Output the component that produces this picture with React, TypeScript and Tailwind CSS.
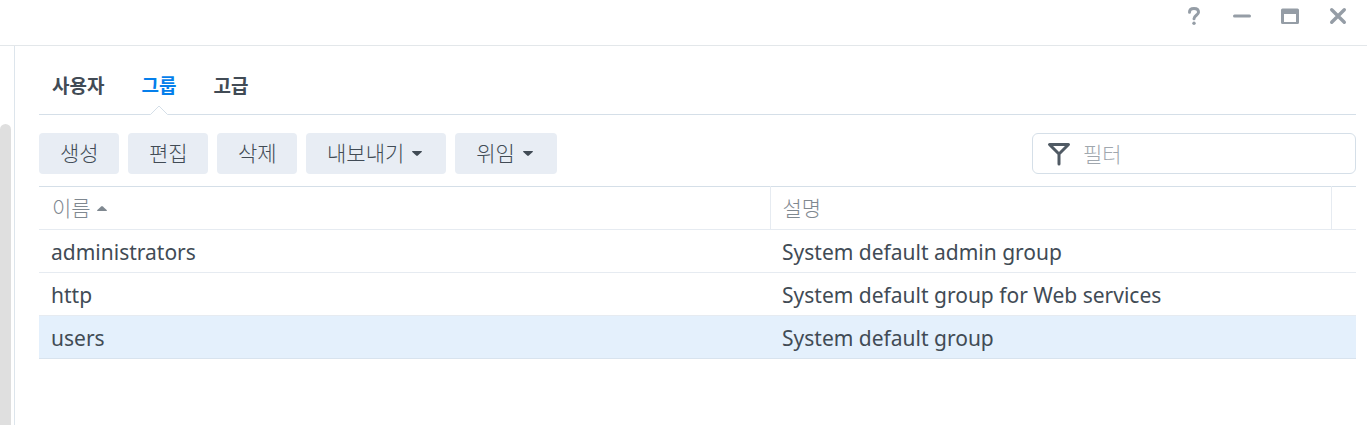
import { useState } from 'react'

interface Group {
    name: string
    description: string
}

const TABS = ['사용자', '그룹', '고급']

const ACTIONS = [
    { label: '생성', menu: false },
    { label: '편집', menu: false },
    { label: '삭제', menu: false },
    { label: '내보내기', menu: true },
    { label: '위임', menu: true },
]

const GROUPS: Group[] = [
    { name: 'administrators', description: 'System default admin group' },
    { name: 'http', description: 'System default group for Web services' },
    { name: 'users', description: 'System default group' },
]

function Caret({ up = false }: { up?: boolean }) {
    return (
        <svg
            width="10"
            height="5"
            viewBox="0 0 10 5"
            fill="currentColor"
            className={up ? 'rotate-180' : ''}
            aria-hidden="true"
        >
            <path d="M.6 0h8.8q.9.2.3.9L5.8 4.6q-.8.7-1.6 0L.3.9Q-.3.2.6 0Z" />
        </svg>
    )
}

function WindowBar() {
    return (
        <header className="flex h-[46px] shrink-0 items-start justify-end gap-6 border-b border-[#e3e7ea] pt-1 pr-[17px] text-[#959da6]">
            <button type="button" aria-label="도움말" className="size-6">
                <svg viewBox="0 0 24 24" fill="none" stroke="currentColor" strokeWidth="3" strokeLinecap="round">
                    <path d="M7.5 8.3C7.5 5.7 9.3 4.5 12 4.5s4.5 1.3 4.5 3.7c0 2.9-4.5 3.3-4.5 6.6" />
                    <circle cx="12" cy="19.3" r="1.7" fill="currentColor" stroke="none" />
                </svg>
            </button>
            <button type="button" aria-label="최소화" className="size-6">
                <svg viewBox="0 0 24 24" fill="currentColor">
                    <rect x="3" y="10.5" width="18" height="3" rx="1.5" />
                </svg>
            </button>
            <button type="button" aria-label="최대화" className="size-6">
                <svg viewBox="0 0 24 24" fill="currentColor" fillRule="evenodd">
                    <path d="M4.5 4.5h15Q21 4.500 21 6v12.500q0 1.500-1.500 1.500h-15Q3 20 3 18.500V6q0-1.500 1.500-1.500ZM6 10v8h12v-8Z" />
                </svg>
            </button>
            <button type="button" aria-label="닫기" className="size-6">
                <svg viewBox="0 0 24 24" fill="none" stroke="currentColor" strokeWidth="3.4" strokeLinecap="round">
                    <path d="m5.7 5.7 12.6 12.6M18.3 5.7 5.700 18.300" />
                </svg>
            </button>
        </header>
    )
}

export default function App() {
    const [tab, setTab] = useState('그룹')
    const [selected, setSelected] = useState('users')
    const [filter, setFilter] = useState('')

    const rows = GROUPS.filter(g => g.name.includes(filter))

    return (
        <div className="flex min-h-screen flex-col bg-white font-['Noto_Sans','Noto_Sans_CJK_KR',sans-serif] text-[21px] text-[#414b55]">
            <WindowBar />

            <div className="flex flex-1">
                <aside className="flex w-[15px] shrink-0 border-r border-[#dde5ec] pt-[78px]">
                    <div className="w-[11px] rounded-t-full bg-[#dfdfdf]" />
                </aside>

                <main className="min-w-0 flex-1 pr-[11px] pl-6">
                    <nav className="flex h-[69px] gap-[37px] border-b border-[#d5dfe8] px-[13px] font-['Noto_Sans_CJK_KR',sans-serif] text-[19px] font-bold">
                        {TABS.map(t => (
                            <button
                                key={t}
                                type="button"
                                onClick={() => setTab(t)}
                                className={`relative pt-[10px] leading-6 ${t === tab ? 'text-[#057feb]' : ''}`}
                            >
                                {t}
                                {t === tab && (
                                    <svg
                                        width="18"
                                        height="10"
                                        viewBox="0 0 18 10"
                                        className="absolute -bottom-px left-1/2 -translate-x-1/2"
                                    >
                                        <path d="M0 10 9 1l9 9Z" fill="#fff" />
                                        <path d="M.5 9.5 9 1l8.5 8.5" fill="none" stroke="#d5dfe8" />
                                    </svg>
                                )}
                            </button>
                        ))}
                    </nav>

                    <div className="flex items-center gap-[9px] pt-[18px] pb-3 font-['Noto_Sans_CJK_KR',sans-serif] font-light">
                        {ACTIONS.map(a => (
                            <button
                                key={a.label}
                                type="button"
                                className={`flex h-[41px] min-w-20 items-center gap-2 rounded bg-[#e8edf4] pl-[21px] ${
                                    a.menu ? 'pr-6' : 'pr-5'
                                }`}
                            >
                                <span className="pb-0.5">{a.label}</span>
                                {a.menu && <Caret />}
                            </button>
                        ))}

                        <label className="ml-auto flex h-[41px] w-[324px] items-center gap-3 rounded-md border border-[#d5dfe8] px-[14px]">
                            <svg
                                width="24"
                                height="24"
                                viewBox="0 0 24 24"
                                fill="none"
                                stroke="#505a64"
                                strokeWidth="3"
                                strokeLinecap="round"
                                strokeLinejoin="round"
                                aria-hidden="true"
                            >
                                <path d="M2.5 2.5h19L12 12ZM12 12v10" />
                            </svg>
                            <input
                                type="text"
                                aria-label="필터"
                                placeholder="필터"
                                value={filter}
                                onChange={e => setFilter(e.target.value)}
                                className="min-w-0 flex-1 outline-none placeholder:text-[#a0a7ae]"
                            />
                        </label>
                    </div>

                    <table className="w-full table-fixed border-collapse border-t border-[#d5dfe8] text-left">
                        <colgroup>
                            <col />
                            <col className="w-[561px]" />
                            <col className="w-[25px]" />
                        </colgroup>
                        <thead className="font-['Noto_Sans_CJK_KR',sans-serif] text-[#7f8890]">
                            <tr className="h-[43px] border-b border-[#e6ebf1]">
                                <th scope="col" className="border-r border-[#e6ebf1] px-[13px] font-light">
                                    <button type="button" className="flex items-center gap-1.5">
                                        이름
                                        <Caret up />
                                    </button>
                                </th>
                                <th scope="col" className="border-r border-[#e6ebf1] px-3 font-light">
                                    설명
                                </th>
                                <td />
                            </tr>
                        </thead>
                        <tbody className="leading-7">
                            {rows.map(g => (
                                <tr
                                    key={g.name}
                                    onClick={() => setSelected(g.name)}
                                    className={`h-[43px] border-b ${
                                        g.name === selected
                                            ? 'border-[#d8e3ee] bg-[#e4f0fc]'
                                            : 'border-[#e6ebf1]'
                                    }`}
                                >
                                    <td className="px-3 pt-0.5">{g.name}</td>
                                    <td className="px-3 pt-0.5">{g.description}</td>
                                    <td />
                                </tr>
                            ))}
                        </tbody>
                    </table>
                </main>
            </div>
        </div>
    )
}
